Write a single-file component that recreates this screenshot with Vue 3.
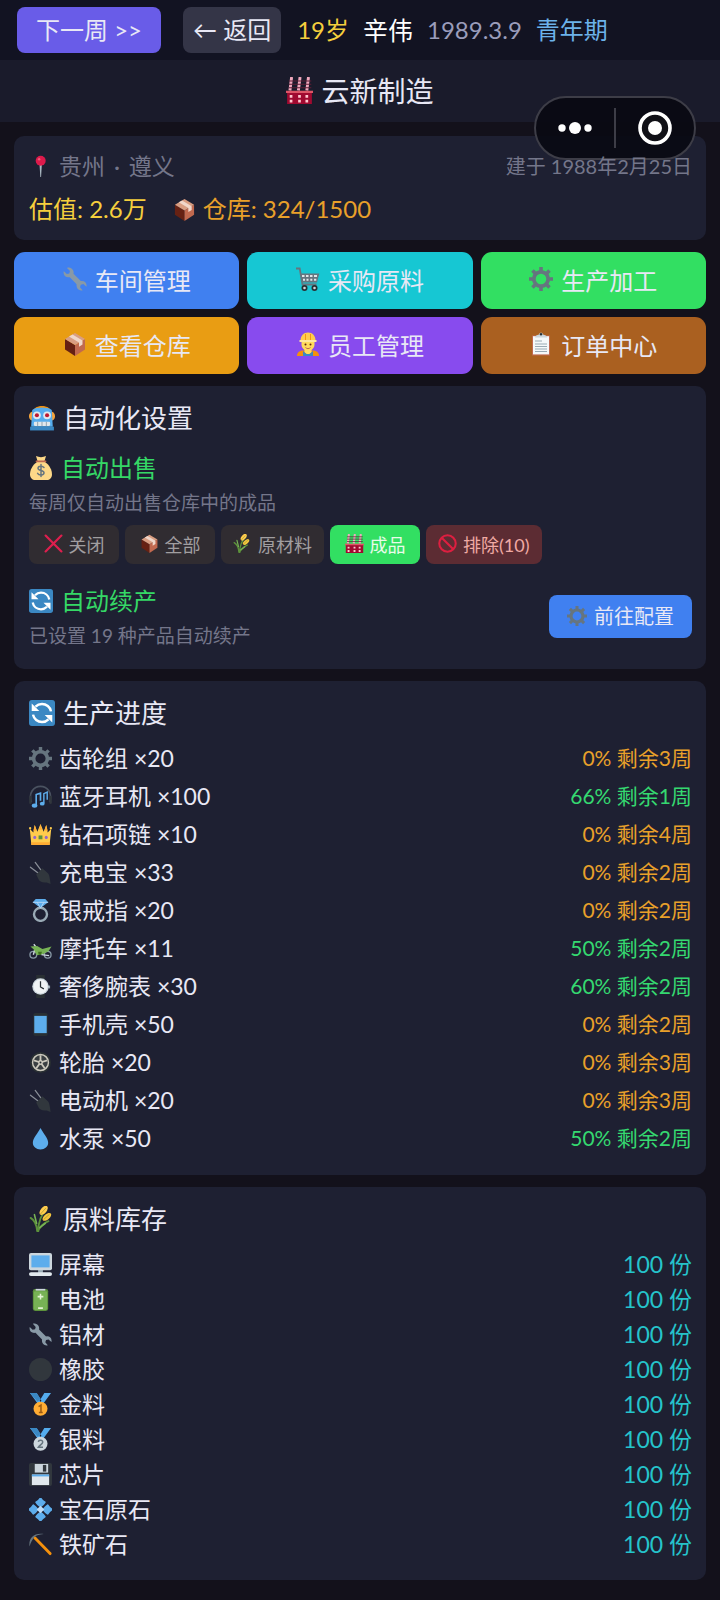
<template>
  <div class="factory-page">
    <svg class="sprite" aria-hidden="true">
      <symbol v-for="(body, name) in icons" :id="'i-' + name" :key="name" viewBox="0 0 24 24" v-html="body"></symbol>
    </svg>

    <header class="top-bar">
      <button class="btn-next">下一周 &gt;&gt;</button>
      <button class="btn-back">← 返回</button>
      <div class="player-info">
        <span class="age">19岁</span>
        <span class="name">辛伟</span>
        <span class="date">1989.3.9</span>
        <span class="stage">青年期</span>
      </div>
    </header>

    <h1 class="page-title">
      <svg class="icon"><use href="#i-factory" /></svg>
      云新制造
    </h1>

    <div class="capsule">
      <button class="capsule-btn" aria-label="更多">
        <svg width="34" height="14" viewBox="0 0 34 14" fill="#fff">
          <circle cx="4" cy="7" r="3.7" />
          <circle cx="17" cy="7" r="6" />
          <circle cx="30" cy="7" r="3.7" />
        </svg>
      </button>
      <span class="capsule-line"></span>
      <button class="capsule-btn" aria-label="关闭小程序">
        <svg width="34" height="34" viewBox="0 0 34 34">
          <circle cx="17" cy="17" r="15" fill="#101016" stroke="#fff" stroke-width="3.6" />
          <circle cx="17" cy="17" r="7" fill="#fff" />
        </svg>
      </button>
    </div>

    <main class="content">
      <section class="card summary">
        <div class="summary-row">
          <span class="place">
            <svg class="icon"><use href="#i-pin" /></svg>
            <span>贵州 <span class="dot">·</span> 遵义</span>
          </span>
          <span class="founded">建于 1988年2月25日</span>
        </div>
        <div class="summary-row stats">
          <span class="worth">估值: 2.6万</span>
          <span class="storage">
            <svg class="icon"><use href="#i-box" /></svg>
            仓库: 324/1500
          </span>
        </div>
      </section>

      <nav class="menu-grid">
        <button v-for="m in menus" :key="m.text" class="menu-btn" :class="m.color">
          <svg class="icon"><use :href="'#i-' + m.icon" /></svg>
          {{ m.text }}
        </button>
      </nav>

      <section class="card auto">
        <h2 class="card-title">
          <svg class="icon"><use href="#i-robot" /></svg>
          自动化设置
        </h2>
        <h3 class="sub-title">
          <svg class="icon"><use href="#i-money" /></svg>
          自动出售
        </h3>
        <p class="desc">每周仅自动出售仓库中的成品</p>
        <div class="chips">
          <button
            v-for="c in sellModes"
            :key="c.key"
            class="chip"
            :class="{ active: sellMode === c.key }"
            @click="sellMode = c.key"
          >
            <svg class="icon"><use :href="'#i-' + c.icon" /></svg>
            {{ c.text }}
          </button>
          <button class="chip exclude">
            <svg class="icon"><use href="#i-ban" /></svg>
            排除(10)
          </button>
        </div>
        <div class="renew">
          <div>
            <h3 class="sub-title">
              <svg class="icon"><use href="#i-refresh" /></svg>
              自动续产
            </h3>
            <p class="desc">已设置 19 种产品自动续产</p>
          </div>
          <button class="btn-config">
            <svg class="icon"><use href="#i-gear" /></svg>
            前往配置
          </button>
        </div>
      </section>

      <section class="card">
        <h2 class="card-title">
          <svg class="icon"><use href="#i-refresh" /></svg>
          生产进度
        </h2>
        <ul class="list progress-list">
          <li v-for="p in products" :key="p.name">
            <svg class="icon"><use :href="'#i-' + p.icon" /></svg>
            <span class="item-name">{{ p.name }} ×{{ p.count }}</span>
            <span class="item-state" :class="{ running: p.percent > 0 }">{{ p.percent }}% 剩余{{ p.weeks }}周</span>
          </li>
        </ul>
      </section>

      <section class="card">
        <h2 class="card-title">
          <svg class="icon"><use href="#i-rice" /></svg>
          原料库存
        </h2>
        <ul class="list stock-list">
          <li v-for="s in stocks" :key="s.name">
            <svg class="icon"><use :href="'#i-' + s.icon" /></svg>
            <span class="item-name">{{ s.name }}</span>
            <span class="item-stock">{{ s.count }} 份</span>
          </li>
        </ul>
      </section>
    </main>
  </div>
</template>

<script setup>
import { ref } from 'vue'

const sellMode = ref('product')

const menus = [
  { icon: 'wrench', text: '车间管理', color: 'blue' },
  { icon: 'cart', text: '采购原料', color: 'cyan' },
  { icon: 'gear', text: '生产加工', color: 'green' },
  { icon: 'box', text: '查看仓库', color: 'orange' },
  { icon: 'worker', text: '员工管理', color: 'purple' },
  { icon: 'clipboard', text: '订单中心', color: 'brown' }
]

const sellModes = [
  { key: 'off', icon: 'cross', text: '关闭' },
  { key: 'all', icon: 'box', text: '全部' },
  { key: 'material', icon: 'rice', text: '原材料' },
  { key: 'product', icon: 'factory', text: '成品' }
]

const products = [
  { icon: 'gear', name: '齿轮组', count: 20, percent: 0, weeks: 3 },
  { icon: 'headphone', name: '蓝牙耳机', count: 100, percent: 66, weeks: 1 },
  { icon: 'crown', name: '钻石项链', count: 10, percent: 0, weeks: 4 },
  { icon: 'plug', name: '充电宝', count: 33, percent: 0, weeks: 2 },
  { icon: 'ring', name: '银戒指', count: 20, percent: 0, weeks: 2 },
  { icon: 'motor', name: '摩托车', count: 11, percent: 50, weeks: 2 },
  { icon: 'watch', name: '奢侈腕表', count: 30, percent: 60, weeks: 2 },
  { icon: 'phone', name: '手机壳', count: 50, percent: 0, weeks: 2 },
  { icon: 'tire', name: '轮胎', count: 20, percent: 0, weeks: 3 },
  { icon: 'plug', name: '电动机', count: 20, percent: 0, weeks: 3 },
  { icon: 'drop', name: '水泵', count: 50, percent: 50, weeks: 2 }
]

const stocks = [
  { icon: 'screen', name: '屏幕', count: 100 },
  { icon: 'battery', name: '电池', count: 100 },
  { icon: 'wrench', name: '铝材', count: 100 },
  { icon: 'black', name: '橡胶', count: 100 },
  { icon: 'gold', name: '金料', count: 100 },
  { icon: 'silver', name: '银料', count: 100 },
  { icon: 'disk', name: '芯片', count: 100 },
  { icon: 'gem', name: '宝石原石', count: 100 },
  { icon: 'pickaxe', name: '铁矿石', count: 100 }
]

// 图标，统一 24x24
const icons = {
  factory: `
    <path d="M3.500 12 5 0M11 12 12.500 0M18.500 12 20 0" stroke="#f0a8bd" stroke-width="2.600"/>
    <path d="M2.500 3.500h20M2.500 6.500h20M2.500 9.500h20" stroke="#5d1f36" stroke-width=".9"/>
    <path d="M1 13h22v11H1z" fill="#a00a30"/>
    <path d="M0 12.200h24v2H0z" fill="#dd5566"/>
    <path d="M4.500 16v7M12 16v7M18.500 16v7" stroke="#ffc7cf" stroke-width="2.400" stroke-dasharray="2.400 1.800"/>`,
  pin: `
    <path d="M11 10h2.400l-.8 13h-.8z" fill="#aab8c2"/>
    <circle cx="12.200" cy="6" r="5.200" fill="#dd1a4b"/>
    <circle cx="10.600" cy="4.500" r="1.300" fill="#ee5a78"/>`,
  box: `
    <path d="M2 7 12 13v11L2 17.500z" fill="#662113"/>
    <path d="M22 7 12 13v11l10-6.500z" fill="#c1694f"/>
    <path d="M2 7 12 1l10 6-10 6z" fill="#d99e82"/>
    <path d="M6 4.500 9.500 2.500 19.500 8.500v4l-3.500 2.200v-4.200z" fill="#f0d7ca"/>`,
  wrench: `
    <path d="M8.200 1.200c-1.300-.8-3-.8-4.200-.3l3 3.200-.7 2.300-2.500.7L.8 4.200C-.2 8 2.500 11 6.800 10.200l6.800 7c-.7 4 2.400 7 6 6l-2.600-3 .8-2.500 2.600-.6 3 2.700c.9-3.700-1.800-6.500-5.600-5.800L10.500 6.800c.4-2.200-.2-4.300-2.300-5.600z" fill="#8899a6"/>`,
  cart: `
    <path d="M0 1.500h3.700L6.500 17.500h14" fill="none" stroke="#66757f" stroke-width="1.800"/>
    <path d="M4.600 6.500h18.700L21 15.500H6.300z" fill="#66757f"/>
    <path d="M6 8h2.500v2H6zm4 0h2.500v2H10zm4 0h2.500v2H14zm4 0h3v2h-3zM7 11.800h2v2H7zm3.500 0h2v2h-2zm3.800 0h2v2h-2zm3.700 0h2.300v2H18z" fill="#dfe5e9"/>
    <circle cx="8.500" cy="21" r="3" fill="#292f33"/><circle cx="8.500" cy="21" r="1.300" fill="#ccd6dd"/>
    <circle cx="18.500" cy="21" r="3" fill="#292f33"/><circle cx="18.500" cy="21" r="1.300" fill="#ccd6dd"/>`,
  gear: `
    <circle cx="12" cy="12" r="7.200" fill="none" stroke="#66757f" stroke-width="3.800"/>
    <path d="M12 0v4M12 20v4M0 12h4M20 12h4M3.500 3.500l2.900 2.900M17.600 17.600l2.900 2.900M20.500 3.500l-2.900 2.900M6.400 17.600l-2.900 2.900" stroke="#66757f" stroke-width="3.600"/>`,
  worker: `
    <path d="M1 24c0-4 3-5.500 6-5.500h10c3 0 6 1.500 6 5.500z" fill="#f4900c"/>
    <path d="M8.500 16h7v4.500L12 23l-3.500-2.500z" fill="#ffdc5d"/>
    <path d="M7 19v5h10v-5l-3.500 3h-3z" fill="#3b88c3"/>
    <path d="M5.500 7h13v5.500c0 3.500-3 6.500-6.500 6.500s-6.500-3-6.500-6.500z" fill="#ffdc5d"/>
    <path d="M4.500 9C4.500 3.500 7.500.5 12 .5S19.500 3.500 19.500 9z" fill="#ffcc4d"/>
    <path d="M3.500 8h17v2h-17z" fill="#ffe8a0"/>
    <path d="M9.500 2v6M14.500 2v6" stroke="#f4900c" stroke-width=".9"/>
    <circle cx="9.500" cy="12.500" r="1" fill="#662113"/><circle cx="14.500" cy="12.500" r="1" fill="#662113"/>
    <path d="M9.500 15.500c1.500 1.500 3.500 1.500 5 0" fill="none" stroke="#c1694f" stroke-width="1"/>`,
  clipboard: `
    <path d="M3 3.500h18v20H3z" fill="#c1694f"/>
    <path d="M4 4.200h16v18.200H4z" fill="#f5f8fa"/>
    <path d="M6 5.500c0-2 2-2.500 4-3 .3-2.500 3.700-2.500 4 0 2 .5 4 1 4 3z" fill="#ccd6dd"/>
    <circle cx="12" cy="2.300" r="1.200" fill="#292f33"/>
    <path d="M6 9h7M6 12h12M6 14.500h12M6 17h12M6 19.500h12" stroke="#99aab5" stroke-width="1"/>`,
  robot: `
    <path d="M4 5C6-.5 18-.5 20 5z" fill="#f4900c"/>
    <rect x="0" y="6" width="24" height="8.500" rx="4" fill="#f4a33c"/>
    <path d="M3 4.500C7 1.500 17 1.500 21 4.500L22 20H2z" fill="#55acee"/>
    <path d="M1 20h22v3.500H1z" fill="#3b88c3"/>
    <circle cx="7.300" cy="9.500" r="3.600" fill="#e1e8ed"/><circle cx="16.700" cy="9.500" r="3.600" fill="#e1e8ed"/>
    <circle cx="7.300" cy="9.500" r="1.900" fill="#be1931"/><circle cx="16.700" cy="9.500" r="1.900" fill="#be1931"/>
    <rect x="4.500" y="15.500" width="15" height="3.800" rx="1" fill="#e1e8ed"/>
    <path d="M8 15.500v4M12 15.500v4M16 15.500v4" stroke="#8899a6" stroke-width=".8"/>`,
  money: `
    <path d="M8 6C3.500 9 1 14 1 18.500 1 22 3.500 24 6 24h12c2.500 0 5-2 5-5.500C23 14 20.500 9 16 6z" fill="#fdd888"/>
    <path d="M7 0c3 1.500 7 1.500 10 0l-1.500 5h-7z" fill="#fdd888"/>
    <path d="M7.500 5.300h9" stroke="#bf6952" stroke-width="1.800" stroke-linecap="round"/>
    <path d="M15 11.500c-1.500-2-6-1.800-6 .8 0 3 6 1.600 6 4.500 0 2.800-5 2.900-6.400.6M12 8.500v12" fill="none" stroke="#67757f" stroke-width="1.500" stroke-linecap="round"/>`,
  cross: `<path d="M2 2l20 20M22 2 2 22" stroke="#dd1f4e" stroke-width="2.800" stroke-linecap="round"/>`,
  ban: `
    <circle cx="12" cy="12" r="10.400" fill="none" stroke="#dd1f40" stroke-width="2.600"/>
    <path d="M5 5l14 14" stroke="#dd1f40" stroke-width="2.600"/>`,
  rice: `
    <path d="M8.500 24C8.500 15 11 8 16 4M8 24c2-5 5-8 10-10M7.500 23C7 17 5 13 1.500 11" fill="none" stroke="#5c913b" stroke-width="1.700" stroke-linecap="round"/>
    <path d="M7 16 5 8M10 20l5-4" stroke="#77b255" stroke-width="1.500" stroke-linecap="round"/>
    <ellipse cx="13.500" cy="4" rx="5" ry="2.700" transform="rotate(-50 13.500 4)" fill="#ffcc4d"/>
    <ellipse cx="16.500" cy="10" rx="4.800" ry="2.500" transform="rotate(-40 16.500 10)" fill="#f4c63d"/>
    <path d="M10.500 7.500l5-5.500M13.500 12.500l5.500-5" stroke="#a9a433" stroke-width=".8"/>`,
  refresh: `
    <rect width="24" height="24" rx="2.700" fill="#3b88c3"/>
    <path d="M20.300 10.500C19.500 6.500 16 3.700 12 3.700c-2.600 0-4.500 1-6 2.500" fill="none" stroke="#fff" stroke-width="2.300"/>
    <path d="M3.700 13.500C4.500 17.500 8 20.300 12 20.300c2.600 0 4.500-1 6-2.500" fill="none" stroke="#fff" stroke-width="2.300"/>
    <path d="M2.500 3.200v7H9.500zM21.500 20.800v-7H14.500z" fill="#fff"/>`,
  headphone: `
    <path d="M2.500 18C-1 8 5 1.500 12 1.500S25 8 21.500 18" fill="none" stroke="#4a5260" stroke-width="1.800"/>
    <path d="M1.500 12.500v6M22.500 12.500v6" stroke="#31373d" stroke-width="2.600" stroke-linecap="round"/>
    <path d="M7.500 21.500V10l4.500-1.500v8" fill="none" stroke="#5dadec" stroke-width="1.700"/>
    <path d="M15.500 19V9l3.500-1.500v8" fill="none" stroke="#5dadec" stroke-width="1.500"/>
    <ellipse cx="5.800" cy="21.500" rx="2.900" ry="2.300" fill="#5dadec"/><ellipse cx="13.800" cy="19.500" rx="2.500" ry="2" fill="#5dadec"/>`,
  crown: `
    <path d="M2.500 23 .8 6l3.700 4L6 2l2.700 7L12 1l3.300 8L18 2l1.500 8 3.700-4-1.700 17z" fill="#ffcc4d"/>
    <path d="M4.500 8 6 2l2 6zM10.500 7 12 1l1.500 6zM16 8l2-6 1.500 6z" fill="#ffac33"/>
    <path d="M2.300 20h19.400l-.2 3h-19z" fill="#ffac33"/>
    <circle cx="1.200" cy="5.500" r="1.200" fill="#ffcc4d"/><circle cx="22.800" cy="5.500" r="1.200" fill="#ffcc4d"/>
    <circle cx="6" cy="15" r="1.600" fill="#9266cc"/><circle cx="18" cy="15" r="1.600" fill="#9266cc"/>
    <rect x="10" y="13" width="4" height="4" fill="#5c913b"/>`,
  plug: `
    <path d="M1.500 6.500l8 6M6.500 1.500l6 8" stroke="#8a8f98" stroke-width="1.300" stroke-linecap="round"/>
    <path d="M7.500 14 14 7.500l6 5.500c1.500 2 1.500 5 2 7l.5 4-4-1.500c-3 0-6-.5-8-2.500z" fill="#31373d"/>`,
  ring: `
    <circle cx="12" cy="16" r="6.800" fill="none" stroke="#99aab5" stroke-width="2.500"/>
    <path d="M7 0h10l3 3.500L12 9.500 4 3.500z" fill="#5dadec"/>
    <path d="M4 3.500h16M8.500 3.500 12 9.500l3.500-6" stroke="#bddaf4" stroke-width=".9" fill="none"/>`,
  motor: `
    <circle cx="4.500" cy="18.500" r="3.500" fill="none" stroke="#8899a6" stroke-width="1.400"/>
    <circle cx="19.500" cy="18.500" r="3.500" fill="none" stroke="#8899a6" stroke-width="1.400"/>
    <path d="M4.500 18.500 7 10 5 7.500" fill="none" stroke="#ccd6dd" stroke-width="1.500"/>
    <path d="M1.500 10l7-.5 5.500 3 9.500-2.500-3 4.500-6 3.500-6.500 1-3-6z" fill="#77b255"/>
    <path d="M9.500 15.500h4l-1 3h-2.500z" fill="#3e721d"/>
    <path d="M13 18.500l8 1" stroke="#ccd6dd" stroke-width="1.300"/>`,
  watch: `
    <path d="M7.500 0h9v24h-9z" fill="#292f33"/>
    <path d="M20 11h2v3h-2z" fill="#99aab5"/>
    <circle cx="12" cy="12" r="8.600" fill="#ccd6dd"/>
    <circle cx="12" cy="12" r="7.300" fill="#f0f3f5"/>
    <path d="M12 6.500v6l3.500 2" fill="none" stroke="#292f33" stroke-width="1.300"/>`,
  phone: `
    <rect x="4.500" y="0" width="15" height="24" rx="2" fill="#292f33"/>
    <path d="M5.500 3h13v18h-13z" fill="#5dadec"/>`,
  tire: `
    <circle cx="12" cy="12" r="11" fill="#292f33"/>
    <circle cx="12" cy="12" r="8.300" fill="#3a3f42" stroke="#ccc9bd" stroke-width="1.500"/>
    <path d="M12 12V4.500M12 12l7-2.300M12 12l4.400 6M12 12l-4.400 6M12 12 5 9.700" stroke="#ccc9bd" stroke-width="1.900"/>
    <circle cx="12" cy="12" r="2.500" fill="#ccc9bd"/><circle cx="12" cy="12" r="1" fill="#292f33"/>`,
  drop: `<path d="M12 1c3 6 8 10.500 8 15.500 0 4-3.500 7-8 7s-8-3-8-7C4 11.500 9 7 12 1z" fill="#5dadec"/>`,
  screen: `
    <path d="M9.500 17h5v4h-5z" fill="#99aab5"/>
    <rect x="0" y="0" width="24" height="18" rx="2" fill="#ccd6dd"/>
    <path d="M2.500 2.500h19v12.500h-19z" fill="#5dadec"/>
    <rect x="0" y="20" width="24" height="4" rx="2" fill="#e1e8ed"/>`,
  battery: `
    <rect x="4" y="1" width="16" height="23" rx="2.500" fill="#5c913b"/>
    <path d="M7 1.800h10" stroke="#ccd6dd" stroke-width="1.800"/>
    <rect x="5" y="3.500" width="14" height="19.500" rx="1.500" fill="#77b255"/>
    <path d="M12 6v6M9 9h6M9.500 21h5" stroke="#e3f2d4" stroke-width="1.600"/>`,
  black: `<circle cx="12" cy="12" r="12" fill="#31373d"/>`,
  gold: `
    <path d="M1 0h7l5 8-4 3zM23 0h-7l-5 8 4 3z" fill="#55acee"/>
    <path d="M1 0h7l4 6-3 3z" fill="#3b88c3"/>
    <circle cx="12" cy="16.500" r="7.300" fill="#ffac33"/>
    <path d="M10 14.300l2.500-1.600v7.600M10.300 20.300h4" fill="none" stroke="#9b5b12" stroke-width="1.600"/>`,
  silver: `
    <path d="M1 0h7l5 8-4 3zM23 0h-7l-5 8 4 3z" fill="#55acee"/>
    <path d="M1 0h7l4 6-3 3z" fill="#3b88c3"/>
    <circle cx="12" cy="16.500" r="7.300" fill="#ccd6dd"/>
    <path d="M9.700 14.500c.5-2.500 4.800-2.200 4.600.3-.1 1.800-3 3-4.500 5.200h4.800" fill="none" stroke="#66757f" stroke-width="1.600"/>`,
  disk: `
    <rect width="24" height="24" rx="2" fill="#31373d"/>
    <path d="M6 1h14v9H6z" fill="#ccd6dd"/>
    <path d="M14.500 2h3.500v7h-3.500z" fill="#31373d"/>
    <path d="M3 12h18v11H3z" fill="#e1e8ed"/>
    <path d="M3 12h18v2H3z" fill="#5dadec"/>`,
  gem: `
    <path d="M12 0c1 2 2 3 4.500 4.500C15 7 13.500 8 12 9 10.500 8 9 7 7.500 4.500 10 3 11 2 12 0zM12 24c1-2 2-3 4.500-4.500C15 17 13.500 16 12 15c-1.500 1-3 2-4.500 4.500C10 21 11 22 12 24zM0 12c2-1 3-2 4.500-4.500C7 9 8 10.500 9 12c-1 1.500-2 3-4.500 4.500C3 14 2 13 0 12zM24 12c-2-1-3-2-4.500-4.500C17 9 16 10.500 15 12c1 1.500 2 3 4.500 4.500C21 14 22 13 24 12z" fill="#5dadec" stroke="#5dadec" stroke-width="1.800" stroke-linejoin="round"/>
    <path d="M12 8l4 4-4 4-4-4z" fill="#bddaf4"/>`,
  pickaxe: `
    <path d="M6 5l16 16.500" stroke="#f4900c" stroke-width="3" stroke-linecap="round"/>
    <path d="M.5 14C-.5 5 5-.5 15.500 1c-5.500.5-9 1.500-10.500 4S2 9.500.5 14z" fill="#66757f"/>`
}
</script>

<style>
body {
  margin: 0;
  background: #13111b;
}
</style>

<style scoped>
.factory-page {
  position: relative;
  background: #13111b;
  color: #e8e8f5;
  font-family: Lato, "Noto Sans CJK SC", sans-serif;
  font-size: 23px;
}

.sprite {
  position: absolute;
  width: 0;
  height: 0;
}

h1, h2, h3, p, ul {
  margin: 0;
  padding: 0;
  font-weight: normal;
}

button {
  padding: 0;
  border: none;
  font-family: inherit;
  color: inherit;
  white-space: nowrap;
  cursor: pointer;
}

.icon {
  flex: none;
  width: 23px;
  height: 23px;
}

/* 顶部栏 */
.top-bar {
  display: flex;
  align-items: center;
  padding: 7px 17px;
  background: #121322;
  font-size: 24px;
}

.btn-next,
.btn-back {
  height: 46px;
  border-radius: 8px;
  font-size: 24px;
}

.btn-next {
  padding: 0 19px 4px;
  margin-right: 22px;
  background: #695ce8;
}

.btn-back {
  padding: 0 10px 4px;
  margin-right: 16px;
  background: #343547;
}

.player-info {
  display: flex;
  align-items: center;
  gap: 14px;
  line-height: 36px;
}

.age {
  color: #f5cf3d;
}

.name {
  color: #fff;
  font-size: 25px;
}

.date {
  color: #9a9dbb;
}

.stage {
  color: #6cb2ea;
}

.page-title {
  display: flex;
  align-items: center;
  justify-content: center;
  gap: 8px;
  height: 60px;
  padding-bottom: 2px;
  background: #1a1b2b;
  font-size: 28px;
}

.page-title .icon {
  width: 27px;
  height: 27px;
}

/* 小程序胶囊 */
.capsule {
  position: absolute;
  top: 96px;
  right: 24px;
  display: flex;
  align-items: center;
  box-sizing: border-box;
  width: 162px;
  height: 64px;
  border: 2px solid #3d3d47;
  border-radius: 32px;
  background: rgba(10, 10, 19, 0.94);
}

.capsule-btn {
  flex: 1;
  display: flex;
  align-items: center;
  justify-content: center;
  background: none;
}

.capsule-line {
  width: 2px;
  height: 40px;
  background: #3d3d47;
}

/* 内容 */
.content {
  display: flex;
  flex-direction: column;
  gap: 12px;
  padding: 14px 14px 21px;
}

.card {
  padding: 14px 14px 18px 15px;
  border-radius: 10px;
  background: #1e2032;
}

.summary {
  padding-top: 15px;
  padding-bottom: 15px;
}

.summary-row {
  display: flex;
  align-items: center;
  justify-content: space-between;
  line-height: 30px;
}

.stats {
  justify-content: flex-start;
  gap: 26px;
  margin-top: 12px;
  font-size: 24px;
  line-height: 32px;
}

.place,
.storage {
  display: flex;
  align-items: center;
  gap: 7px;
}

.place,
.founded {
  color: #74768a;
}

.dot {
  padding: 0 3px;
}

.founded {
  position: relative;
  font-size: 20px;
}

.worth {
  color: #f5cf3d;
}

.storage {
  color: #e9a02a;
}

.menu-grid {
  display: grid;
  grid-template-columns: repeat(3, 1fr);
  gap: 8px;
}

.menu-btn {
  display: flex;
  align-items: center;
  justify-content: center;
  gap: 8px;
  height: 57px;
  padding-bottom: 3px;
  border-radius: 11px;
  font-size: 24px;
}

.menu-btn .icon {
  width: 24px;
  height: 24px;
}

.blue {
  background: #4080f0;
}

.cyan {
  background: #16c7d3;
}

.green {
  background: #32df62;
}

.orange {
  background: #e99d13;
}

.purple {
  background: #884bee;
}

.brown {
  background: #aa6020;
}

.card-title {
  display: flex;
  align-items: center;
  gap: 8px;
  font-size: 26px;
  line-height: 36px;
}

.card-title .icon {
  width: 26px;
  height: 26px;
}

/* 自动化设置 */
.auto {
  padding-bottom: 21px;
}

.sub-title {
  display: flex;
  align-items: center;
  gap: 8px;
  color: #35d866;
  font-size: 24px;
  line-height: 32px;
}

.sub-title .icon {
  width: 24px;
  height: 24px;
}

.card-title + .sub-title {
  margin-top: 16px;
}

.desc {
  margin-top: 7px;
  color: #74768a;
  font-size: 19px;
  line-height: 24px;
}

.chips {
  display: flex;
  flex-wrap: wrap;
  gap: 6px;
  margin-top: 10px;
}

.chip {
  display: flex;
  align-items: center;
  justify-content: center;
  gap: 6px;
  min-width: 90px;
  height: 39px;
  padding: 0 12px 2px;
  border-radius: 8px;
  background: #302c31;
  color: #a19ea0;
  font-size: 18px;
}

.chip .icon {
  width: 19px;
  height: 19px;
}

.chip.active {
  background: #32df62;
  color: #e8fbe9;
}

.chip.exclude {
  background: #5c2c33;
  color: #f0aaa4;
}

.renew {
  display: flex;
  align-items: center;
  justify-content: space-between;
  margin-top: 21px;
}

.btn-config {
  display: flex;
  align-items: center;
  gap: 7px;
  height: 43px;
  padding: 0 18px 2px;
  border-radius: 8px;
  background: #4080f0;
  font-size: 20px;
}

.btn-config .icon {
  width: 20px;
  height: 20px;
}

/* 列表 */
.list {
  list-style: none;
}

.list li {
  display: flex;
  align-items: center;
  gap: 7px;
}

.progress-list {
  margin-top: 8px;
  line-height: 38px;
}

.stock-list {
  margin-top: 10px;
  line-height: 35px;
}

.item-name {
  flex: 1;
}

.item-state {
  color: #e9a02a;
  font-size: 21px;
}

.item-state.running {
  color: #35d870;
}

.item-stock {
  color: #25c3cb;
}
</style>
